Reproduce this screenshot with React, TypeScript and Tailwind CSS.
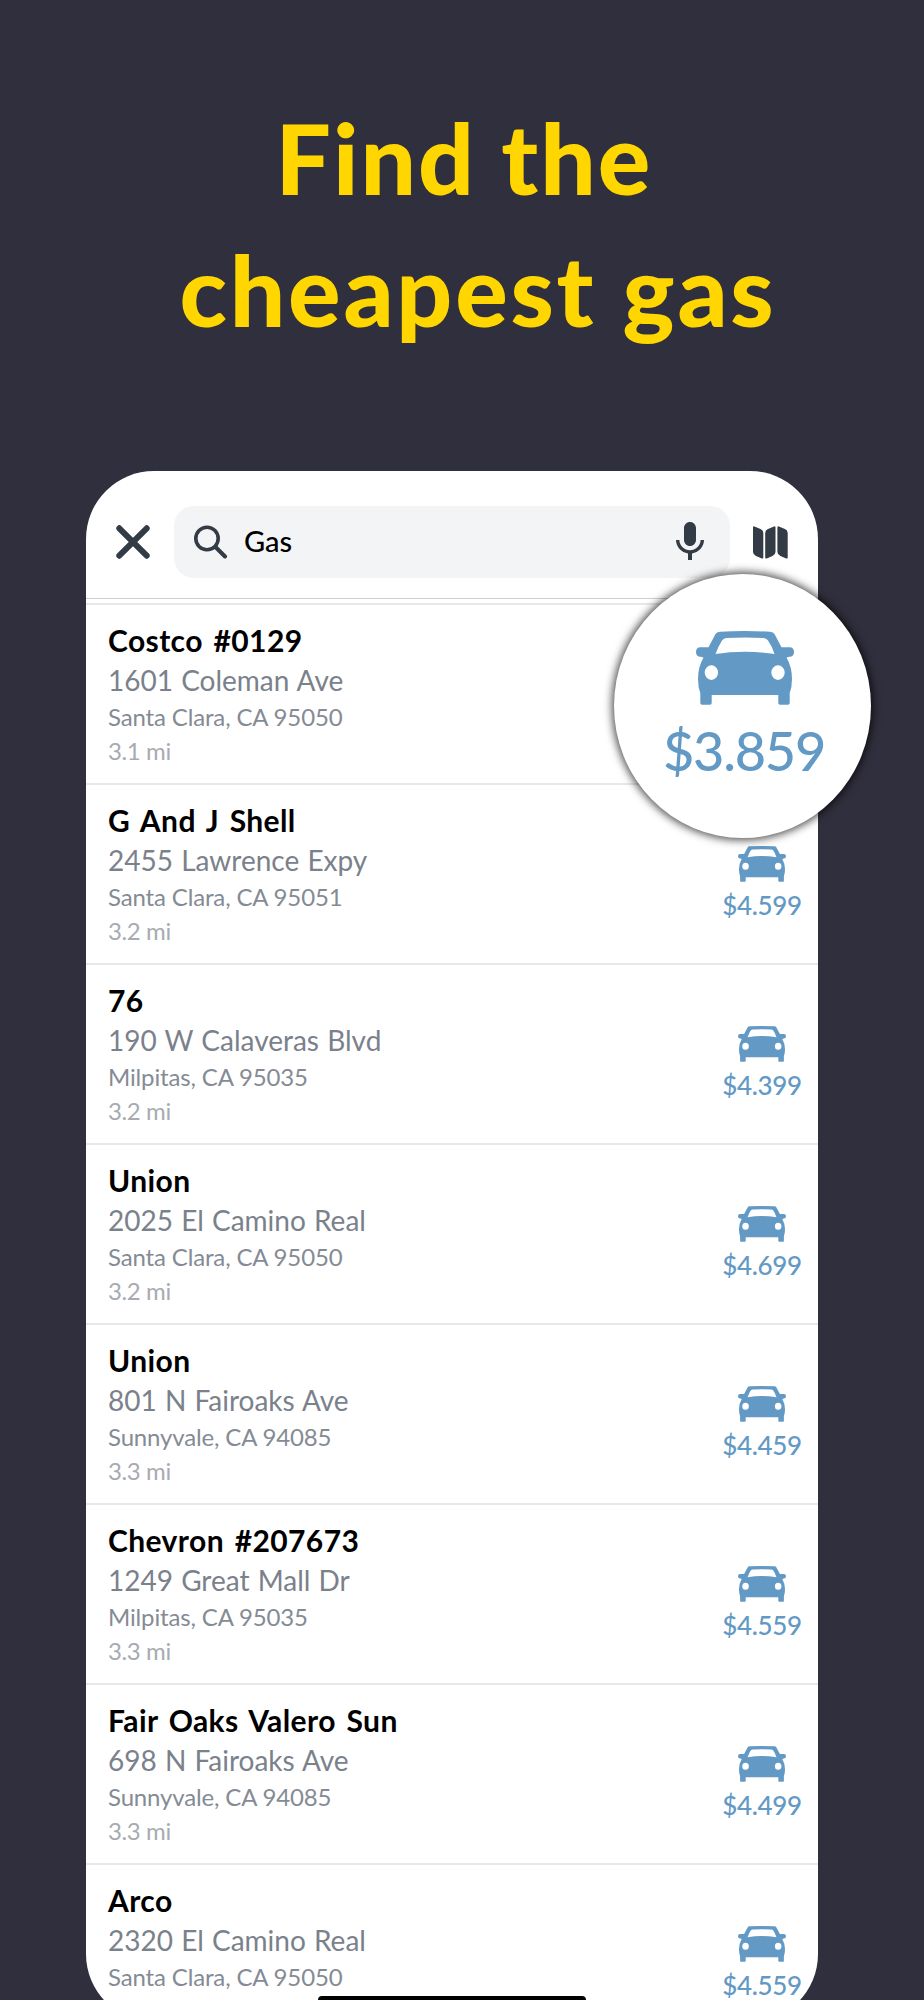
import { MdMic } from 'react-icons/md'

interface Station {
  name: string
  street: string
  city: string
  distance?: string
  price?: string
}

const stations: Station[] = [
  { name: 'Costco #0129', street: '1601 Coleman Ave', city: 'Santa Clara, CA 95050', distance: '3.1 mi' },
  { name: 'G And J Shell', street: '2455 Lawrence Expy', city: 'Santa Clara, CA 95051', distance: '3.2 mi', price: '$4.599' },
  { name: '76', street: '190 W Calaveras Blvd', city: 'Milpitas, CA 95035', distance: '3.2 mi', price: '$4.399' },
  { name: 'Union', street: '2025 El Camino Real', city: 'Santa Clara, CA 95050', distance: '3.2 mi', price: '$4.699' },
  { name: 'Union', street: '801 N Fairoaks Ave', city: 'Sunnyvale, CA 94085', distance: '3.3 mi', price: '$4.459' },
  { name: 'Chevron #207673', street: '1249 Great Mall Dr', city: 'Milpitas, CA 95035', distance: '3.3 mi', price: '$4.559' },
  { name: 'Fair Oaks Valero Sun', street: '698 N Fairoaks Ave', city: 'Sunnyvale, CA 94085', distance: '3.3 mi', price: '$4.499' },
  { name: 'Arco', street: '2320 El Camino Real', city: 'Santa Clara, CA 95050', price: '$4.559' },
]

function CarIcon({ className }: { className?: string }) {
  return (
    <svg viewBox="0 0 98 74" preserveAspectRatio="none" fill="currentColor" className={className}>
      <path
        fillRule="evenodd"
        d="M12.5 16.3 19.5 3Q20.5.9 24 .7 49-.7 74 .7 77.5.9 78.5 3L85.5 16.3H93.5Q98 16.3 98 21T93.5 25.8L90.5 26.5Q96 36 96 48 96 56 93.7 62V72Q93.7 73.7 92 73.7H84Q82.3 73.7 82.3 72V64H15.7V72Q15.7 73.7 14 73.7H6Q4.3 73.7 4.3 72V62Q2 56 2 48 2 36 7.5 26.5L4.5 25.8Q0 25.8 0 21T4.5 16.3ZM19.5 23Q22.5 15 26 9.5 27.5 7.2 30.5 7 49 5.9 67.5 7 70.5 7.2 72 9.500 76 15 78.5 23 49 18.5 19.5 23ZM15.4 34.3A6.700 7.300 0 1 0 15.400 48.900 6.700 7.300 0 1 0 15.400 34.300ZM82 34.300A6.700 7.300 0 1 0 82 48.900 6.700 7.300 0 1 0 82 34.300Z"
      />
    </svg>
  )
}

function CloseIcon() {
  return (
    <svg width="34" height="34" viewBox="0 0 34 34" fill="none" stroke="currentColor" strokeWidth="6" strokeLinecap="round">
      <path d="M3.3 3.3 30.7 30.7M30.7 3.3 3.3 30.7" />
    </svg>
  )
}

function SearchIcon() {
  return (
    <svg width="34" height="34" viewBox="0 0 34 34" fill="none" stroke="currentColor" strokeLinecap="round">
      <circle cx="13" cy="13.5" r="11.2" strokeWidth="3.6" />
      <path d="M21.5 22 31 31.5" strokeWidth="4" />
    </svg>
  )
}

function MapIcon() {
  return (
    <svg width="35" height="33" viewBox="0 0 35 33" fill="currentColor">
      <path d="M0 1.5Q0 0 1.5.4L7.5 3Q10.3 4.2 10.3 7V31.5Q10.3 33 8.8 32.4L3 30Q0 28.5 0 26Z" />
      <path d="M12.2 7Q12.2 4.2 15 3L21 .4Q22.5 0 22.5 1.5V26Q22.5 28.5 19.5 30L13.7 32.4Q12.2 33 12.2 31.5Z" />
      <path d="M24.4 1.5Q24.4 0 25.9.4L31.9 3Q34.7 4.2 34.7 7V31.5Q34.7 33 33.2 32.4L27.4 30Q24.4 28.5 24.4 26Z" />
    </svg>
  )
}

function SearchHeader() {
  return (
    <header className="flex h-32 items-start border-b border-[#cfcfcf] pt-[35px] pl-[30px] text-[#333b46]">
      <div className="flex h-[72px] w-[58px] items-center">
        <CloseIcon />
      </div>
      <div className="flex h-[72px] w-[556px] items-center rounded-[20px] bg-[#f3f4f6] pr-4 pl-5">
        <SearchIcon />
        <span className="mb-0.5 ml-4 flex-1 text-[29px] leading-9 font-medium text-black">Gas</span>
        <MdMic size={48} />
      </div>
      <div className="ml-[23px] flex h-[72px] items-center">
        <MapIcon />
      </div>
    </header>
  )
}

function StationRow({ station }: { station: Station }) {
  return (
    <li className="flex h-[180px] justify-between border-t-2 border-[#e8e8e8] pt-[17px] pl-[22px]">
      <div className="whitespace-nowrap">
        <h2 className="text-[30px] leading-9 font-bold tracking-[0.4px] text-black [word-spacing:3px]">{station.name}</h2>
        <p className="pt-px text-[28px] leading-[42px] text-[#7a818b] [word-spacing:1px]">{station.street}</p>
        <p className="text-[24px] leading-8 tracking-[-0.15px] text-[#858b94]">{station.city}</p>
        {station.distance && (
          <p className="text-[24px] leading-9 tracking-[-0.4px] text-[#a7abb1]">{station.distance}</p>
        )}
      </div>
      {station.price && (
        <div className="flex w-[112px] flex-col items-center pt-11 text-[#6399c5]">
          <CarIcon className="h-9 w-12" />
          <span className="mt-[7px] text-[26px] leading-8 font-medium tracking-[-0.3px]">{station.price}</span>
        </div>
      )}
    </li>
  )
}

export default function App() {
  return (
    <main className="relative h-[2000px] w-[924px] overflow-hidden bg-[#302f3d] pt-[91px] font-['Lato',sans-serif]">
      <h1 className="flex h-[380px] flex-col items-center text-[98px] leading-[132px] font-black text-[#ffd600]">
        <span className="ml-1 tracking-[2px]">Find the</span>
        <span className="ml-8 tracking-[2.8px]">cheapest gas</span>
      </h1>

      <section className="ml-[86px] h-[1551px] w-[732px] overflow-hidden rounded-[68px] bg-white">
        <SearchHeader />
        <ul className="pt-1">
          {stations.map((station, i) => (
            <StationRow key={i} station={station} />
          ))}
        </ul>
      </section>

      {/* Magnified price of the first result */}
      <div className="absolute top-[574px] left-[614px] flex h-[264px] w-[257px] flex-col items-center rounded-[50%] bg-white pt-[57px] text-[#6399c5] shadow-[0_0_8px_2px_rgba(0,0,0,0.7)]">
        <CarIcon className="ml-1 h-[74px] w-[98px]" />
        <span className="mt-4 ml-[3px] text-[54px] leading-[60px] font-medium tracking-[-1.2px]">$3.859</span>
      </div>

      {/* Home indicator */}
      <div className="absolute top-[1996px] left-[318px] h-2 w-[268px] rounded-full bg-black" />
    </main>
  )
}
